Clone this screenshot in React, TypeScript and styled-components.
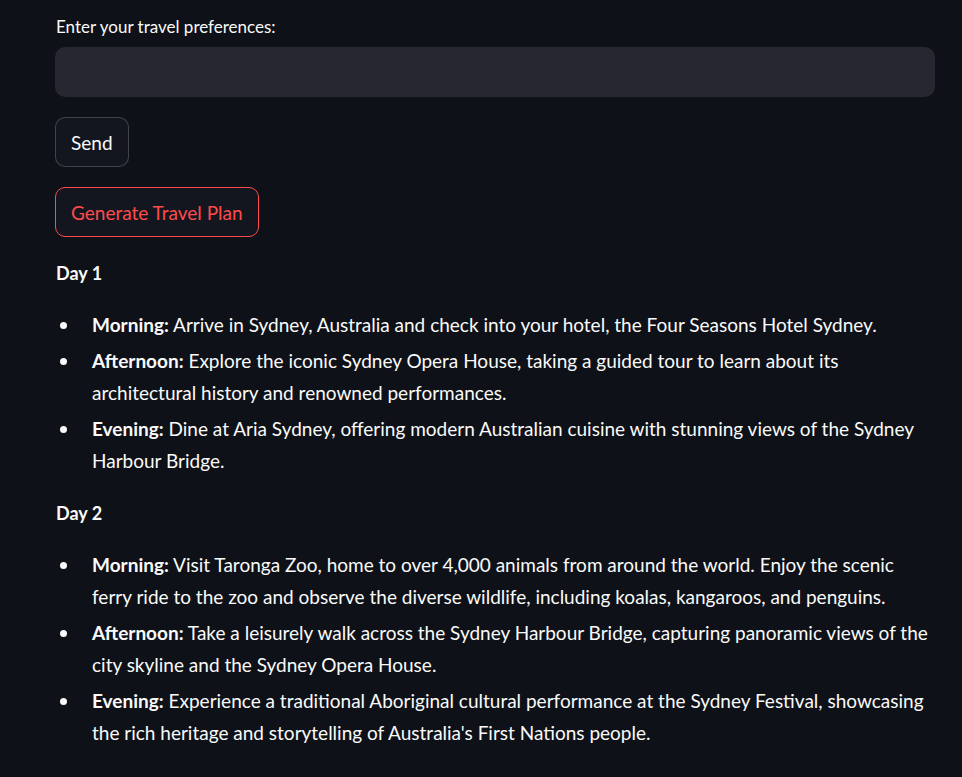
import React from "react";
import styled, { createGlobalStyle } from "styled-components";

const Global = createGlobalStyle`
  html, body { margin: 0; padding: 0; background: #0e1117; }
  body { font-family: "Lato", "Noto Sans", sans-serif; color: #fafafa; }
`;

const Page = styled.div`
  padding: 16px 27px 30px 55px;
  display: flex;
  flex-direction: column;
`;

const Label = styled.label`
  font-size: 17px;
  line-height: 22px;
  height: 22px;
  margin-bottom: 9px;
  padding-left: 1px;
  color: #fafafa;
`;

const Input = styled.div`
  height: 50px;
  background: #262730;
  border-radius: 10px;
`;

const Button = styled.button<{ $primary?: boolean }>`
  align-self: flex-start;
  height: 50px;
  margin-top: 20px;
  padding: 0 15px;
  border-radius: 10px;
  background: #13161e;
  border: 1px solid ${(p) => (p.$primary ? "#ff4b4b" : "rgba(250,250,250,0.2)")};
  color: ${(p) => (p.$primary ? "#ff4b4b" : "#fafafa")};
  font-family: inherit;
  font-size: 19px;
`;

const Day = styled.p`
  margin: 24px 0 0;
  padding-left: 1px;
  font-weight: 700;
  font-size: 18px;
  line-height: 24px;
`;

const List = styled.ul`
  margin: 24px 0 0;
  padding: 0;
  list-style: none;
  font-size: 19px;
  line-height: 32px;
`;

const Item = styled.li`
  display: grid;
  grid-template-columns: 37px 1fr;
  margin-bottom: 4px;
  &:last-child { margin-bottom: 0; }
  b { font-weight: 700; }
`;

const Bullet = styled.span`
  display: flex;
  align-items: center;
  height: 32px;
  padding-left: 5px;
  &::before {
    content: "";
    width: 7px;
    height: 7px;
    border-radius: 50%;
    background: #fafafa;
  }
`;

const days = [
  {
    title: "Day 1",
    items: [
      ["Morning:", "Arrive in Sydney, Australia and check into your hotel, the Four Seasons Hotel Sydney."],
      ["Afternoon:", "Explore the iconic Sydney Opera House, taking a guided tour to learn about its architectural history and renowned performances."],
      ["Evening:", "Dine at Aria Sydney, offering modern Australian cuisine with stunning views of the Sydney Harbour Bridge."],
    ],
  },
  {
    title: "Day 2",
    items: [
      ["Morning:", "Visit Taronga Zoo, home to over 4,000 animals from around the world. Enjoy the scenic ferry ride to the zoo and observe the diverse wildlife, including koalas, kangaroos, and penguins."],
      ["Afternoon:", "Take a leisurely walk across the Sydney Harbour Bridge, capturing panoramic views of the city skyline and the Sydney Opera House."],
      ["Evening:", "Experience a traditional Aboriginal cultural performance at the Sydney Festival, showcasing the rich heritage and storytelling of Australia's First Nations people."],
    ],
  },
];

export default function App() {
  return (
    <>
      <Global />
      <Page>
        <Label>Enter your travel preferences:</Label>
        <Input />
        <Button>Send</Button>
        <Button $primary>Generate Travel Plan</Button>
        {days.map((d) => (
          <React.Fragment key={d.title}>
            <Day>{d.title}</Day>
            <List>
              {d.items.map(([k, v]) => (
                <Item key={k}>
                  <Bullet />
                  <span>
                    <b>{k}</b> {v}
                  </span>
                </Item>
              ))}
            </List>
          </React.Fragment>
        ))}
      </Page>
    </>
  );
}
